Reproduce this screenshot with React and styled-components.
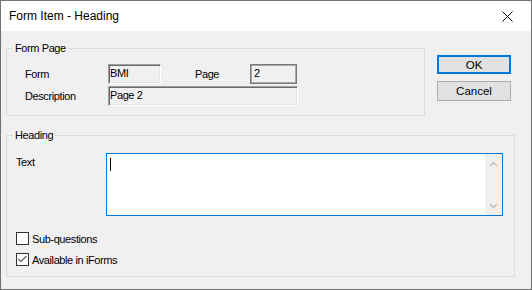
import React from "react";
import styled, { createGlobalStyle } from "styled-components";

const Global = createGlobalStyle`
  html, body { margin: 0; padding: 0; background: #f0f0f0; }
  body { font-family: "Liberation Sans", Arial, sans-serif; font-size: 11px; letter-spacing: -0.4px; color: #000; }
  * { box-sizing: border-box; }
`;

const Window = styled.div`
  width: 532px;
  height: 290px;
  border: 1px solid #717171;
  background: #f0f0f0;
  display: flex;
  flex-direction: column;
`;

const TitleBar = styled.div`
  height: 30px;
  background: #fff;
  display: flex;
  align-items: center;
  justify-content: space-between;
  padding: 0 18px 0 8px;
  flex: none;
`;

const Title = styled.span`
  font-family: "Liberation Sans", Arial, sans-serif;
  font-size: 12px;
  letter-spacing: 0;
  color: #000;
  padding-bottom: 1px;
`;

const Body = styled.div`
  flex: 1;
  padding: 10px 0 0 5px;
  display: flex;
  flex-direction: column;
`;

const TopRow = styled.div`
  display: flex;
  align-items: flex-start;
`;

const Group = styled.fieldset`
  margin: ${(p) => p.$mt || 0}px 0 0 0;
  padding: 0;
  border: 1px solid #dcdcdc;
  width: ${(p) => p.$width}px;
  min-inline-size: 0;
  flex: none;
`;

const Legend = styled.legend`
  margin-left: 6px;
  padding: 0 2px;
  line-height: 14px;
  font-size: 11px;
`;

const FormPageGrid = styled.div`
  display: flex;
  flex-direction: column;
  gap: 2px;
  padding: 9px 0 9px 18px;
`;

const FieldRow = styled.div`
  display: flex;
  align-items: center;
  height: 20px;
`;

const Label = styled.span`
  width: ${(p) => p.$w}px;
  margin-left: ${(p) => p.$ml || 0}px;
  flex: none;
`;

const ReadField = styled.div`
  width: ${(p) => p.$w}px;
  height: 20px;
  flex: none;
  background: #f0f0f0;
  border-style: solid;
  border-width: 1px;
  border-color: #a0a0a0 #ffffff #ffffff #a0a0a0;
  box-shadow: inset 1px 1px 0 #696969, inset -1px -1px 0 #e3e3e3;
  padding: 2px 0 0 1px;
  line-height: 13px;
  white-space: nowrap;
`;

const FlatField = styled.div`
  width: ${(p) => p.$w}px;
  height: 20px;
  flex: none;
  background: #f0f0f0;
  border: 1px solid #7a7a7a;
  box-shadow: inset 0 0 0 1px #a8a8a8;
  padding: 2px 0 0 3px;
  line-height: 13px;
`;

const ButtonCol = styled.div`
  display: flex;
  flex-direction: column;
  gap: 7px;
  margin-left: 12px;
  padding-top: 14px;
`;

const Button = styled.div`
  width: 74px;
  height: ${(p) => (p.$default ? 19 : 20)}px;
  background: #e1e1e1;
  border: ${(p) => (p.$default ? "2px solid #0078d7" : "1px solid #adadad")};
  display: flex;
  align-items: center;
  justify-content: center;
  font-size: 11.5px;
  letter-spacing: 0;
`;

const HeadingGroupBody = styled.div`
  padding: 11px 0 10px 9px;
  display: flex;
  flex-direction: column;
`;

const TextRow = styled.div`
  display: flex;
  align-items: flex-start;
`;

const TextLabel = styled.span`
  width: 90px;
  padding-top: 3px;
  flex: none;
`;

const TextBox = styled.div`
  width: 397px;
  height: 63px;
  background: #fff;
  border: 1px solid #0078d7;
  display: flex;
  justify-content: space-between;
`;

const Caret = styled.span`
  width: 1px;
  height: 13px;
  background: #000;
  margin: 4px 0 0 3px;
`;

const ScrollTrack = styled.div`
  width: 17px;
  background: #f0f0f0;
  display: flex;
  flex-direction: column;
  justify-content: space-between;
  align-items: center;
  padding: 7px 0 6px;
`;

const Checks = styled.div`
  display: flex;
  flex-direction: column;
  gap: 8px;
  margin-top: 16px;
`;

const CheckRow = styled.div`
  display: flex;
  align-items: center;
  height: 13px;
  gap: 3px;
`;

const Box = styled.span`
  width: 13px;
  height: 13px;
  border: 1px solid #333;
  background: #fff;
  display: flex;
  flex: none;
`;

const Chevron = ({ up }) => (
  <svg width="9" height="6" viewBox="0 0 9 6">
    <polyline
      points={up ? "1,5 4.5,1.5 8,5" : "1,1 4.5,4.5 8,1"}
      fill="none"
      stroke="#c2c2c2"
      strokeWidth="1.6"
    />
  </svg>
);

const Check = ({ checked, children }) => (
  <CheckRow>
    <Box>
      {checked && (
        <svg width="11" height="11" viewBox="0 0 11 11">
          <polyline points="1.5,5 4,7.5 9.5,2" fill="none" stroke="#5a5a5a" strokeWidth="1.1" />
        </svg>
      )}
    </Box>
    <span>{children}</span>
  </CheckRow>
);

export default function App() {
  return (
    <>
      <Global />
      <Window>
        <TitleBar>
          <Title>Form Item - Heading</Title>
          <svg width="11" height="11" viewBox="0 0 11 11">
            <path d="M0.5 0.5 L10.5 10.5 M10.5 0.5 L0.5 10.5" stroke="#000" strokeWidth="1" />
          </svg>
        </TitleBar>
        <Body>
          <TopRow>
            <Group $width={419}>
              <Legend>Form Page</Legend>
              <FormPageGrid>
                <FieldRow>
                  <Label $w={83}>Form</Label>
                  <ReadField $w={53}>BMI</ReadField>
                  <Label $w={55} $ml={34}>Page</Label>
                  <FlatField $w={47}>2</FlatField>
                </FieldRow>
                <FieldRow>
                  <Label $w={83}>Description</Label>
                  <ReadField $w={190}>Page 2</ReadField>
                </FieldRow>
              </FormPageGrid>
            </Group>
            <ButtonCol>
              <Button $default>OK</Button>
              <Button>Cancel</Button>
            </ButtonCol>
          </TopRow>
          <Group $width={509} $mt={12}>
            <Legend>Heading</Legend>
            <HeadingGroupBody>
              <TextRow>
                <TextLabel>Text</TextLabel>
                <TextBox>
                  <Caret />
                  <ScrollTrack>
                    <Chevron up />
                    <Chevron />
                  </ScrollTrack>
                </TextBox>
              </TextRow>
              <Checks>
                <Check>Sub-questions</Check>
                <Check checked>Available in iForms</Check>
              </Checks>
            </HeadingGroupBody>
          </Group>
        </Body>
      </Window>
    </>
  );
}
